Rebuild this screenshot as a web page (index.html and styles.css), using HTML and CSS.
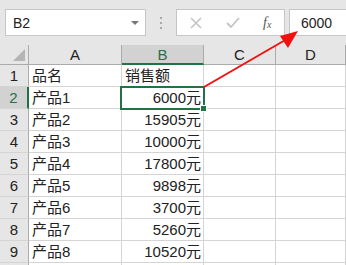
FILE: index.html
```html
<!DOCTYPE html>
<html>
<head>
    <title>销售额</title>
    <link rel="stylesheet" href="styles.css">
</head>
<body>
    <!-- 编辑栏 -->
    <div class="toolbar">
        <div class="namebox">
            <span>B2</span>
            <span class="drop"></span>
        </div>
        <div class="dots"><i></i><i></i><i></i></div>
        <div class="buttons">
            <svg width="12" height="12" viewBox="0 0 12 12"><path d="M1 1L11 11M11 1L1 11" stroke="#c4c4c4" stroke-width="1.6"/></svg>
            <svg width="14" height="12" viewBox="0 0 14 12"><path d="M1 6L5 10L13 1" stroke="#c4c4c4" stroke-width="1.8" fill="none"/></svg>
            <span class="fx">f<sub>x</sub></span>
        </div>
        <div class="formula">6000</div>
    </div>

    <!-- 表格 -->
    <div class="sheet">
        <div class="hd corner"><span class="tri"></span></div>
        <div class="hd">A</div>
        <div class="hd sel-col">B</div>
        <div class="hd">C</div>
        <div class="hd">D</div>

        <div class="rh">1</div><div class="c">品名</div><div class="c">销售额</div><div class="c"></div><div class="c"></div>
        <div class="rh sel-row">2</div><div class="c">产品1</div><div class="c num active">6000元</div><div class="c"></div><div class="c"></div>
        <div class="rh">3</div><div class="c">产品2</div><div class="c num">15905元</div><div class="c"></div><div class="c"></div>
        <div class="rh">4</div><div class="c">产品3</div><div class="c num">10000元</div><div class="c"></div><div class="c"></div>
        <div class="rh">5</div><div class="c">产品4</div><div class="c num">17800元</div><div class="c"></div><div class="c"></div>
        <div class="rh">6</div><div class="c">产品5</div><div class="c num">9898元</div><div class="c"></div><div class="c"></div>
        <div class="rh">7</div><div class="c">产品6</div><div class="c num">3700元</div><div class="c"></div><div class="c"></div>
        <div class="rh">8</div><div class="c">产品7</div><div class="c num">5260元</div><div class="c"></div><div class="c"></div>
        <div class="rh">9</div><div class="c">产品8</div><div class="c num">10520元</div><div class="c"></div><div class="c"></div>
        <div class="rh">10</div><div class="c"></div><div class="c"></div><div class="c"></div><div class="c"></div>
    </div>

    <!-- 红色箭头 -->
    <svg class="arrow" width="346" height="265" viewBox="0 0 346 265">
        <line x1="204" y1="87" x2="287" y2="39" stroke="#f01010" stroke-width="2"/>
        <polygon points="298,31 280,36 288,48" fill="#f01010"/>
    </svg>
</body>
</html>
```

FILE: styles.css
```css
body {
    margin: 0;
    width: 346px;
    height: 265px;
    overflow: hidden;
    background-color: #fff;
    font-family: "Liberation Sans", "Noto Sans CJK SC", sans-serif;
    color: #222;
    position: relative;
}

.toolbar {
    height: 45px;
    background-color: #e6e6e6;
    display: flex;
    align-items: flex-start;
    padding-top: 9px;
    box-sizing: border-box;
}

.namebox {
    margin-left: 5px;
    width: 141px;
    height: 27px;
    background-color: #fff;
    border: 1px solid #c6c6c6;
    box-sizing: border-box;
    display: flex;
    align-items: center;
    justify-content: space-between;
    padding: 0 6px 0 7px;
    font-size: 14px;
}

.drop {
    width: 0;
    height: 0;
    border-left: 4px solid transparent;
    border-right: 4px solid transparent;
    border-top: 4px solid #777;
}

.dots {
    width: 30px;
    height: 27px;
    display: flex;
    flex-direction: column;
    align-items: center;
    justify-content: center;
    gap: 3px;
}

.dots i {
    width: 2px;
    height: 2px;
    background-color: #a8a8a8;
}

.buttons {
    width: 109px;
    height: 27px;
    background-color: #fff;
    border: 1px solid #c6c6c6;
    box-sizing: border-box;
    display: flex;
    align-items: center;
    padding-left: 13px;
    gap: 0;
}

.buttons svg:nth-child(2) {
    margin-left: 24px;
}

.fx {
    margin-left: 23px;
    font-family: "Liberation Serif", serif;
    font-style: italic;
    font-size: 14px;
    color: #555;
}

.fx sub {
    font-size: 10px;
    vertical-align: -1px;
}

.formula {
    margin-left: 4px;
    flex: 1;
    height: 27px;
    background-color: #fff;
    border: 1px solid #c6c6c6;
    border-right: none;
    box-sizing: border-box;
    font-size: 14px;
    padding: 5px 0 0 11px;
}

.sheet {
    display: grid;
    grid-template-columns: 29px 93px 82px 72px 1fr;
    grid-template-rows: 20px repeat(10, 22px);
}

.hd {
    background-color: #e6e6e6;
    border-right: 1px solid #ababab;
    border-bottom: 1px solid #ababab;
    box-sizing: border-box;
    font-size: 15px;
    text-align: center;
    line-height: 19px;
    color: #222;
}

.corner {
    position: relative;
}

.tri {
    position: absolute;
    right: 3px;
    bottom: 3px;
    width: 0;
    height: 0;
    border-left: 12px solid transparent;
    border-bottom: 12px solid #b4b4b4;
}

.sel-col {
    background-color: #d2d2d2;
    border-bottom: 2px solid #217346;
    color: #217346;
}

.rh {
    background-color: #e6e6e6;
    border-right: 1px solid #ababab;
    border-bottom: 1px solid #d4d4d4;
    box-sizing: border-box;
    font-size: 15px;
    text-align: center;
    line-height: 22px;
}

.sel-row {
    background-color: #d2d2d2;
    border-right: 2px solid #217346;
    color: #217346;
}

.c {
    border-right: 1px solid #d4d4d4;
    border-bottom: 1px solid #d4d4d4;
    box-sizing: border-box;
    font-size: 15px;
    line-height: 21px;
    padding: 0 3px;
    white-space: nowrap;
}

.num {
    text-align: right;
    padding-right: 2px;
}

.active {
    position: relative;
}

.active::before {
    content: "";
    position: absolute;
    left: -2px;
    top: -1px;
    right: -2px;
    bottom: -2px;
    border: 2px solid #217346;
}

.active::after {
    content: "";
    position: absolute;
    right: -4px;
    bottom: -4px;
    width: 5px;
    height: 5px;
    background-color: #217346;
    border: 1px solid #fff;
}

.arrow {
    position: absolute;
    left: 0;
    top: 0;
}
```
